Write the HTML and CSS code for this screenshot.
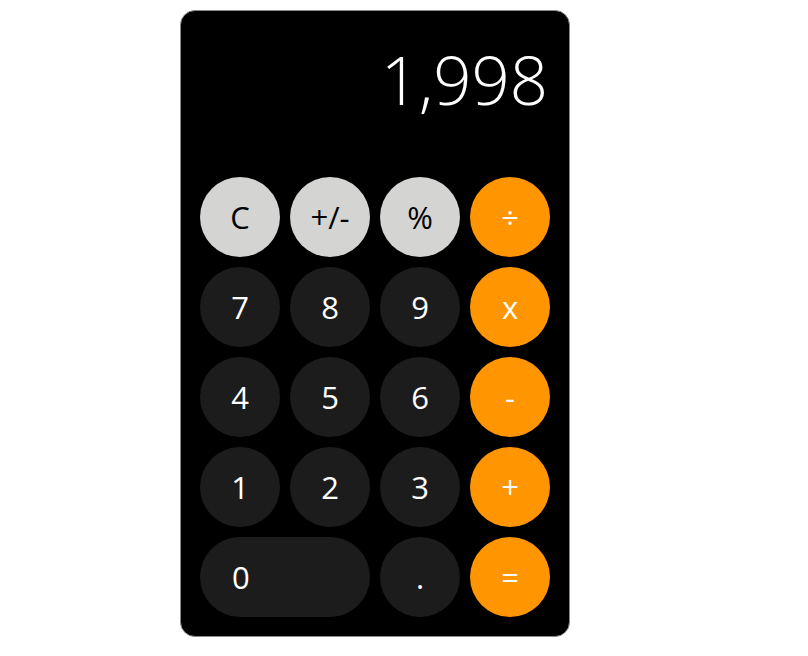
FILE: index.html
```html
<!DOCTYPE html>
<html>
<head>
<meta charset="utf-8">
<link rel="stylesheet" href="styles.css">
</head>
<body>
<div class="calc">
  <div class="display">1,998</div>
  <div class="keys">
    <button class="key light">C</button>
    <button class="key light">+/-</button>
    <button class="key light">%</button>
    <button class="key op">÷</button>
    <button class="key dark">7</button>
    <button class="key dark">8</button>
    <button class="key dark">9</button>
    <button class="key op">x</button>
    <button class="key dark">4</button>
    <button class="key dark">5</button>
    <button class="key dark">6</button>
    <button class="key op">-</button>
    <button class="key dark">1</button>
    <button class="key dark">2</button>
    <button class="key dark">3</button>
    <button class="key op">+</button>
    <button class="key dark zero">0</button>
    <button class="key dark">.</button>
    <button class="key op">=</button>
  </div>
</div>
</body>
</html>
```
FILE: styles.css
```css
html, body {
  margin: 0;
  padding: 0;
  background: #fff;
}
body {
  font-family: "Open Sans", "Noto Sans", sans-serif;
}
.calc {
  box-sizing: border-box;
  width: 390px;
  height: 627px;
  margin: 10px 0 0 180px;
  background: #000;
  border: 1px solid #8a8a8a;
  border-radius: 15px;
  padding: 0 19px 19px 19px;
  display: flex;
  flex-direction: column;
  justify-content: flex-end;
}
.display {
  color: #fff;
  font-size: 67px;
  font-weight: 300;
  text-align: right;
  line-height: 1;
  padding-right: 2px;
  margin-bottom: 64px;
}
.keys {
  display: grid;
  grid-template-columns: repeat(4, 80px);
  grid-auto-rows: 80px;
  gap: 10px;
}
.key {
  border: none;
  border-radius: 40px;
  font-family: inherit;
  font-size: 31px;
  padding: 0;
  display: flex;
  align-items: center;
  justify-content: center;
}
.light { background: #d4d4d2; color: #000; }
.dark { background: #1c1c1c; color: #fff; }
.op { background: #ff9500; color: #fff; }
.zero {
  grid-column: span 2;
  justify-content: flex-start;
  padding-left: 32px;
}
```
